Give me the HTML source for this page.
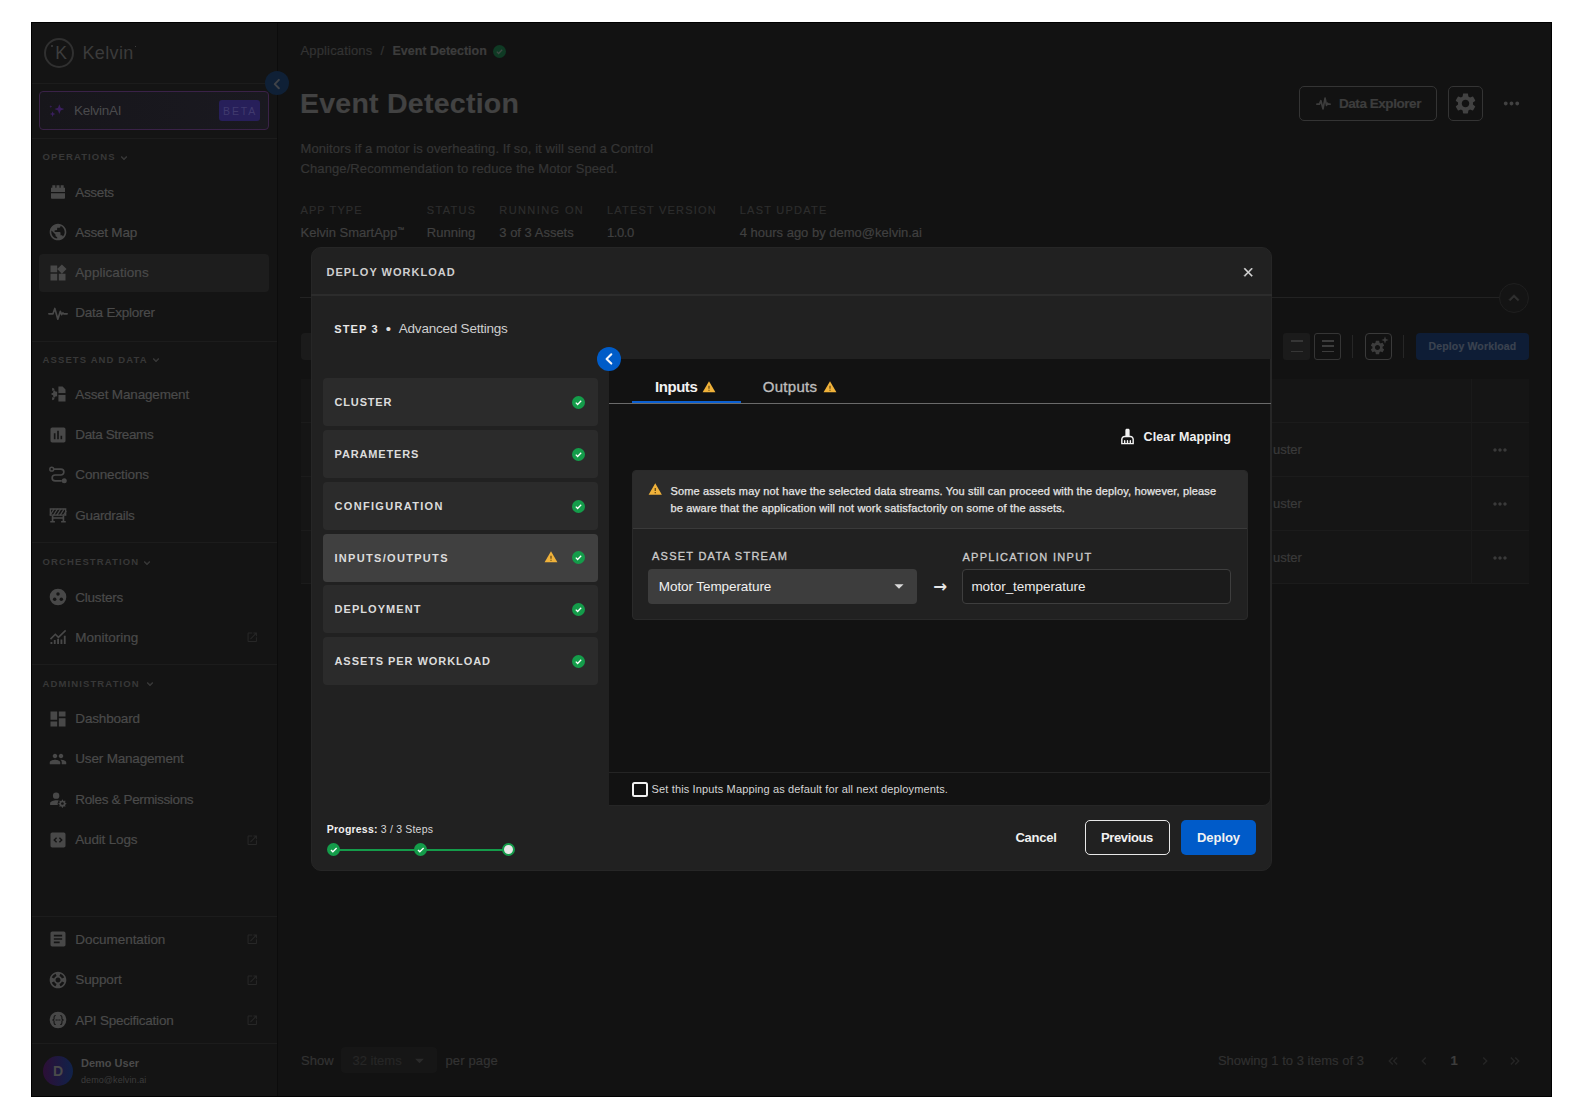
<!DOCTYPE html>
<html lang="en">
<head>
<meta charset="utf-8">
<title>Event Detection - Deploy Workload</title>
<style>
*{box-sizing:border-box;margin:0;padding:0}
html,body{width:1584px;height:1120px;background:#fff;overflow:hidden}
body{font-family:"Liberation Sans",sans-serif;position:relative;color:#444}
.abs,.t,.ic{position:absolute}
.t{white-space:nowrap;line-height:20px;height:20px}
.ic svg{display:block;width:100%;height:100%}
#app{position:absolute;left:31px;top:22px;width:1521px;height:1075px;background:#121212;border:1px solid #000;overflow:hidden}
/* everything inside #app is positioned in PAGE coordinates via this shifted layer */
#L{position:absolute;left:-32px;top:-23px;width:1584px;height:1120px}
#side{position:absolute;left:32px;top:23px;width:245px;height:1073px;background:#141414}
#sideb{position:absolute;left:277px;top:23px;width:1px;height:1073px;background:#0c0c0c}
.hr{position:absolute;left:32px;width:245px;height:1px;background:#1c1c1c}
.nav{font-size:13.5px;color:#4a4a4a;left:75.3px;-webkit-text-stroke:.2px #4a4a4a}
.sec{font-size:9.5px;font-weight:bold;letter-spacing:1.12px;color:#383838;left:42.5px}
.dim{color:#444}
.lab{font-size:11px;letter-spacing:1.3px;color:#2f2f2f}
.val{font-size:13.5px;color:#3e3e3e}
/* modal */
#modal{position:absolute;left:311px;top:247px;width:961px;height:624px;background:#212121;border-radius:10px;overflow:hidden;border:1px solid #262626}
#panel{position:absolute;left:609px;top:359px;width:662px;height:446.5px;background:#121212;border-bottom-right-radius:8px;border-right:1px solid #262626;border-bottom:1px solid #262626}
.item{position:absolute;left:323px;width:275px;height:48px;background:#2b2b2b;border-radius:4px}
.item.sel{background:#404040}
.itx{font-size:11.5px;font-weight:bold;letter-spacing:1.5px;color:#d9d9d9;left:334px}
</style>
</head>
<body>
<div id="app"><div id="L">

<!-- ============ SIDEBAR ============ -->
<div id="side"></div><div id="sideb"></div>
<div class="abs" style="left:44px;top:37.600px;width:30px;height:30px;border:2px solid #303030;border-radius:50%"></div>
<div class="t" style="left:55.200px;top:43px;font-size:17.5px;color:#3d3d3d;letter-spacing:0">K</div>
<div class="abs" style="left:51.400px;top:45.100px;width:2px;height:2px;border-radius:50%;background:#3d3d3d"></div>
<div class="t" style="left:82.500px;top:43px;font-size:18px;letter-spacing:.35px;color:#3b3b3b">Kelvin</div>
<div class="abs" style="left:134.5px;top:45.500px;width:1.5px;height:1.5px;background:#3d3d3d"></div>
<div class="hr" style="top:83px"></div>
<div class="hr" style="top:138px"></div>
<div class="hr" style="top:341px"></div>
<div class="hr" style="top:542px"></div>
<div class="hr" style="top:664px"></div>
<div class="hr" style="top:916px"></div>
<div class="hr" style="top:1043px"></div>
<div class="abs" style="left:39px;top:91px;width:230px;height:39px;border:1px solid #3a2248;border-radius:4px;background:linear-gradient(90deg,#17161b,#1a1920)"></div>
<div class="ic" style="left:48px;top:103px;width:17px;height:15px;color:#3a1f5e"><svg viewBox="0 0 24 20"><path d="M16 1l1.900 5.100L23 8l-5.100 1.900L16 15l-1.900-5.100L9 8l5.100-1.900zM6.500 11l1.100 2.900 2.900 1.100-2.900 1.100-1.100 2.900-1.100-2.900L2.500 15l2.900-1.100zM4 2.500l.6 1.400 1.400.6-1.400.6L4 6.500l-.6-1.400L2 4.500l1.400-.6z" fill="currentColor"/></svg></div>
<div class="t" style="left:74px;top:101px;font-size:13.5px;letter-spacing:-.3px;color:#4a4a4c">KelvinAI</div>
<div class="abs" style="left:219px;top:100px;width:41px;height:21px;border-radius:3px;background:#271f5a"></div>
<div class="t" style="left:223px;top:100.500px;font-size:10.5px;letter-spacing:1.9px;color:#403a6e">BETA</div>
<div class="abs" style="left:265px;top:71px;width:24px;height:24px;border-radius:50%;background:#0f2036;z-index:3"></div>
<div class="ic" style="left:268px;top:74.500px;width:18px;height:18px;color:#404348;z-index:4"><svg viewBox="0 0 24 24"><path d="M14.500 6.500L9 12.200l5.500 5.500" fill="none" stroke="currentColor" stroke-width="2.600" stroke-linecap="round" stroke-linejoin="round"/></svg></div>
<div class="t sec" style="top:147.2px">OPERATIONS</div>
<div class="ic" style="left:118.3px;top:151.5px;width:12px;height:12px;color:#3a3a3a"><svg viewBox="0 0 24 24"><g fill="currentColor" stroke="currentColor" stroke-width="1"><path d="M16.590 8.590L12 13.170 7.410 8.590 6 10l6 6 6-6z"/></g></svg></div>
<div class="t sec" style="top:349.5px">ASSETS AND DATA</div>
<div class="ic" style="left:150.0px;top:353.8px;width:12px;height:12px;color:#3a3a3a"><svg viewBox="0 0 24 24"><g fill="currentColor" stroke="currentColor" stroke-width="1"><path d="M16.590 8.590L12 13.170 7.410 8.590 6 10l6 6 6-6z"/></g></svg></div>
<div class="t sec" style="top:552.2px">ORCHESTRATION</div>
<div class="ic" style="left:141.4px;top:556.5px;width:12px;height:12px;color:#3a3a3a"><svg viewBox="0 0 24 24"><g fill="currentColor" stroke="currentColor" stroke-width="1"><path d="M16.590 8.590L12 13.170 7.410 8.590 6 10l6 6 6-6z"/></g></svg></div>
<div class="t sec" style="top:673.8px">ADMINISTRATION</div>
<div class="ic" style="left:144.3px;top:678.1px;width:12px;height:12px;color:#3a3a3a"><svg viewBox="0 0 24 24"><g fill="currentColor" stroke="currentColor" stroke-width="1"><path d="M16.590 8.590L12 13.170 7.410 8.590 6 10l6 6 6-6z"/></g></svg></div>
<div class="abs" style="left:39px;top:254px;width:230px;height:38px;border-radius:4px;background:#1d1d1d"></div>
<div class="ic" style="left:48px;top:182.0px;width:20px;height:20px;color:#484848"><svg viewBox="0 0 24 24"><g fill="currentColor"><path d="M3.600 6.800h1.600v-3h3.600v3h1.400v-3h3.600v3h1.400v-3h3.600v3h1.600v5.300H3.600zM3.600 13.600h16.800v5.600a1 1 0 0 1-1 1H4.600a1 1 0 0 1-1-1z"/></g></svg></div>
<div class="t nav" style="top:182.5px;letter-spacing:-0.35px">Assets</div>
<div class="ic" style="left:48px;top:222.0px;width:20px;height:20px;color:#484848"><svg viewBox="0 0 24 24"><g fill="currentColor"><path d="M12 2C6.48 2 2 6.48 2 12s4.48 10 10 10 10-4.48 10-10S17.52 2 12 2zm-1 17.93c-3.95-.49-7-3.85-7-7.93 0-.62.08-1.21.21-1.79L9 15v1c0 1.1.9 2 2 2v1.93zm6.9-2.54c-.26-.81-1-1.39-1.9-1.39h-1v-3c0-.55-.45-1-1-1H8v-2h2c.55 0 1-.45 1-1V7h2c1.1 0 2-.9 2-2v-.41c2.93 1.19 5 4.06 5 7.41 0 2.08-.8 3.97-2.1 5.39z"/></g></svg></div>
<div class="t nav" style="top:222.5px;letter-spacing:-0.24px">Asset Map</div>
<div class="ic" style="left:48px;top:262.5px;width:20px;height:20px;color:#484848"><svg viewBox="0 0 24 24"><g fill="currentColor"><path d="M13 13v8h8v-8h-8zM3 21h8v-8H3v8zM3 3v8h8V3H3zm13.66-1.31L11 7.34 16.66 13l5.66-5.66-5.66-5.65z"/></g></svg></div>
<div class="t nav" style="top:263.0px;letter-spacing:0.05px">Applications</div>
<div class="ic" style="left:48px;top:302.8px;width:20px;height:20px;color:#484848"><svg viewBox="0 0 24 24"><g fill="currentColor"><path d="M1 13h5l2.2-6.5 3.6 13 3-9.5 1.6 4 1.4-2.2 1 1.2h4.2" fill="none" stroke="currentColor" stroke-width="2" stroke-linejoin="round" stroke-linecap="round"/></g></svg></div>
<div class="t nav" style="top:303.3px;letter-spacing:-0.23px">Data Explorer</div>
<div class="ic" style="left:48px;top:384.0px;width:20px;height:20px;color:#484848"><svg viewBox="0 0 24 24"><g fill="currentColor"><path d="M12.5 3h5l3.5 3.5V11h-8.5zM12.5 13H21v8h-8.500zM9.500 9.5 11 8.600V15.400L9.500 14.500 8.300 16.200 6.200 15.400 6.200 13.500 4.200 13 4.200 11 6.200 10.500 6.200 8.600 8.300 7.800z"/><path d="M12.500 12h8.500" stroke="#141414" stroke-width="1.6"/><path d="M5 4.500l2.300 1 .6 2.200-2.900.500zM5 19.500l2.300-1 .6-2.200-2.900-.500z"/></g></svg></div>
<div class="t nav" style="top:384.5px;letter-spacing:-0.16px">Asset Management</div>
<div class="ic" style="left:48px;top:424.5px;width:20px;height:20px;color:#484848"><svg viewBox="0 0 24 24"><g fill="currentColor"><path d="M19 3H5c-1.1 0-2 .9-2 2v14c0 1.1.9 2 2 2h14c1.1 0 2-.9 2-2V5c0-1.100-.9-2-2-2zM9 17H7v-7h2v7zm4 0h-2V7h2v10zm4 0h-2v-4h2v4z"/></g></svg></div>
<div class="t nav" style="top:425.0px;letter-spacing:-0.38px">Data Streams</div>
<div class="ic" style="left:48px;top:464.9px;width:20px;height:20px;color:#484848"><svg viewBox="0 0 24 24"><g fill="currentColor"><circle cx="4.500" cy="5" r="2.300" fill="none" stroke="currentColor" stroke-width="1.800"/><circle cx="19.500" cy="19" r="3"/><path d="M7 5h8.500a3.500 3.500 0 0 1 0 7h-7a3.500 3.500 0 0 0 0 7h8" fill="none" stroke="currentColor" stroke-width="2"/></g></svg></div>
<div class="t nav" style="top:465.4px;letter-spacing:-0.13px">Connections</div>
<div class="ic" style="left:48px;top:505.0px;width:20px;height:20px;color:#484848"><svg viewBox="0 0 24 24"><g fill="currentColor"><path d="M2.800 4.800h18.400v7.400H2.800z" fill="none" stroke="currentColor" stroke-width="1.600"/><path d="M4.500 13h2v6.200h1.800v1.800H2.700v-1.800h1.800zM17.500 13h2v6.200h1.800v1.800h-5.600v-1.800h1.800zM6.500 14.800h11v1.700h-11z"/><path d="M2.500 12.500l5-8M6.500 12.500l5-8M10.500 12.500l5-8M14.500 12.500l5-8M18.500 12.500l3.500-5.500" fill="none" stroke="currentColor" stroke-width="1.500"/></g></svg></div>
<div class="t nav" style="top:505.5px;letter-spacing:-0.3px">Guardrails</div>
<div class="ic" style="left:48px;top:587.0px;width:20px;height:20px;color:#484848"><svg viewBox="0 0 24 24"><g fill="currentColor"><circle cx="12" cy="12" r="10"/><circle cx="12" cy="8.300" r="2.100" fill="#141414"/><circle cx="8" cy="14.800" r="2.100" fill="#141414"/><circle cx="16" cy="14.800" r="2.100" fill="#141414"/></g></svg></div>
<div class="t nav" style="top:587.5px;letter-spacing:-0.23px">Clusters</div>
<div class="ic" style="left:48px;top:627.2px;width:20px;height:20px;color:#484848"><svg viewBox="0 0 24 24"><g fill="currentColor"><path d="M3 20.500v-2.500h2.200v2.500zM7 20.500v-5h2.200v5zM11 20.500v-6.500h2.200v6.500zM15 20.500v-5.500h2.200v5.500zM19 20.500V10.500h2.200v10z"/><path d="M3 14.500l5.800-5.800 3.700 3.700L21.200 4" fill="none" stroke="currentColor" stroke-width="1.900"/></g></svg></div>
<div class="t nav" style="top:627.7px;letter-spacing:0px">Monitoring</div>
<div class="ic" style="left:245.800px;top:631.4px;width:12.5px;height:12.5px;color:#272727"><svg viewBox="0 0 24 24"><g fill="currentColor"><path d="M19 19H5V5h7V3H5c-1.110 0-2 .9-2 2v14c0 1.100.89 2 2 2h14c1.100 0 2-.9 2-2v-7h-2v7zM14 3v2h3.590l-9.830 9.830 1.410 1.410L19 6.410V10h2V3h-7z"/></g></svg></div>
<div class="ic" style="left:48px;top:708.5px;width:20px;height:20px;color:#484848"><svg viewBox="0 0 24 24"><g fill="currentColor"><path d="M3 13h8V3H3v10zm0 8h8v-6H3v6zm10 0h8V11h-8v10zm0-18v6h8V3h-8z"/></g></svg></div>
<div class="t nav" style="top:709.0px;letter-spacing:-0.16px">Dashboard</div>
<div class="ic" style="left:48px;top:748.8px;width:20px;height:20px;color:#484848"><svg viewBox="0 0 24 24"><g fill="currentColor"><path transform="translate(1.2 1.2) scale(.9)" d="M16 11c1.660 0 2.990-1.340 2.990-3S17.660 5 16 5c-1.660 0-3 1.340-3 3s1.340 3 3 3zm-8 0c1.660 0 2.990-1.340 2.990-3S9.660 5 8 5C6.340 5 5 6.340 5 8s1.340 3 3 3zm0 2c-2.330 0-7 1.170-7 3.500V19h14v-2.500c0-2.330-4.670-3.500-7-3.500zm8 0c-.29 0-.62.020-.97.050 1.160.840 1.970 1.970 1.970 3.450V19h6v-2.500c0-2.330-4.670-3.500-7-3.500z"/></g></svg></div>
<div class="t nav" style="top:749.3px;letter-spacing:-0.18px">User Management</div>
<div class="ic" style="left:48px;top:789.1px;width:20px;height:20px;color:#484848"><svg viewBox="0 0 24 24"><g fill="currentColor"><g transform="translate(1.200 1.200) scale(.9)"><circle cx="9.500" cy="7.500" r="4.300"/><path d="M9.500 13.500c1.200 0 2.500.2 3.600.5-1 1.100-1.600 2.500-1.600 4 0 .7.100 1.400.400 2H1.500v-2.500c0-2.700 5.300-4 8-4z"/><path d="M17.500 12.800l1 .1.400 1.300 1.200.5 1.200-.7.800.8-.7 1.200.5 1.200 1.300.4v1.200l-1.300.4-.5 1.200.7 1.200-.8.800-1.200-.7-1.200.5-.4 1.300h-1.200l-.4-1.300-1.200-.5-1.200.7-.8-.8.700-1.200-.5-1.200-1.300-.4v-1.200l1.300-.4.500-1.200-.700-1.200.8-.8 1.200.7 1.200-.5zM17.900 16.200a1.800 1.800 0 1 0 .001 0z" fill-rule="evenodd"/></g></g></svg></div>
<div class="t nav" style="top:789.6px;letter-spacing:-0.35px">Roles &amp; Permissions</div>
<div class="ic" style="left:48px;top:829.5px;width:20px;height:20px;color:#484848"><svg viewBox="0 0 24 24"><g fill="currentColor"><path d="M5 3h14c1.100 0 2 .9 2 2v14c0 1.100-.9 2-2 2H5c-1.100 0-2-.9-2-2V5c0-1.100.9-2 2-2zm4.700 5.600L6.300 12l3.400 3.400 1.200-1.200L8.700 12l2.200-2.200zm4.600 0l-1.200 1.200 2.200 2.200-2.200 2.200 1.200 1.200 3.400-3.400z" fill-rule="evenodd"/></g></svg></div>
<div class="t nav" style="top:830.0px;letter-spacing:-0.18px">Audit Logs</div>
<div class="ic" style="left:245.800px;top:833.7px;width:12.5px;height:12.5px;color:#272727"><svg viewBox="0 0 24 24"><g fill="currentColor"><path d="M19 19H5V5h7V3H5c-1.110 0-2 .9-2 2v14c0 1.100.89 2 2 2h14c1.100 0 2-.9 2-2v-7h-2v7zM14 3v2h3.590l-9.830 9.830 1.410 1.410L19 6.410V10h2V3h-7z"/></g></svg></div>
<div class="ic" style="left:48px;top:929.1px;width:20px;height:20px;color:#484848"><svg viewBox="0 0 24 24"><g fill="currentColor"><path d="M19 3H5c-1.100 0-2 .9-2 2v14c0 1.100.9 2 2 2h14c1.100 0 2-.9 2-2V5c0-1.100-.9-2-2-2zm-5 14H7v-2h7v2zm3-4H7v-2h10v2zm0-4H7V7h10v2z"/></g></svg></div>
<div class="t nav" style="top:929.6px;letter-spacing:-0.06px">Documentation</div>
<div class="ic" style="left:245.800px;top:933.3px;width:12.5px;height:12.5px;color:#272727"><svg viewBox="0 0 24 24"><g fill="currentColor"><path d="M19 19H5V5h7V3H5c-1.110 0-2 .9-2 2v14c0 1.100.89 2 2 2h14c1.100 0 2-.9 2-2v-7h-2v7zM14 3v2h3.590l-9.830 9.830 1.410 1.410L19 6.410V10h2V3h-7z"/></g></svg></div>
<div class="ic" style="left:48px;top:969.5px;width:20px;height:20px;color:#484848"><svg viewBox="0 0 24 24"><g fill="currentColor"><path d="M12 2C6.480 2 2 6.480 2 12s4.480 10 10 10 10-4.480 10-10S17.520 2 12 2zm7.460 7.120l-2.780 1.150c-.51-1.360-1.580-2.440-2.950-2.940l1.150-2.780c2.100.8 3.770 2.470 4.580 4.570zM12 15c-1.660 0-3-1.340-3-3s1.340-3 3-3 3 1.340 3 3-1.340 3-3 3zM9.130 4.540l1.170 2.780c-1.380.5-2.470 1.590-2.980 2.970L4.540 9.130c.81-2.110 2.480-3.780 4.590-4.590zM4.540 14.870l2.780-1.150c.51 1.380 1.590 2.460 2.970 2.960l-1.170 2.780c-2.100-.81-3.770-2.480-4.580-4.590zm10.340 4.590l-1.150-2.780c1.370-.51 2.450-1.590 2.950-2.970l2.780 1.170c-.81 2.100-2.480 3.770-4.580 4.580z"/></g></svg></div>
<div class="t nav" style="top:970.0px;letter-spacing:-0.13px">Support</div>
<div class="ic" style="left:245.800px;top:973.7px;width:12.5px;height:12.5px;color:#272727"><svg viewBox="0 0 24 24"><g fill="currentColor"><path d="M19 19H5V5h7V3H5c-1.110 0-2 .9-2 2v14c0 1.100.89 2 2 2h14c1.100 0 2-.9 2-2v-7h-2v7zM14 3v2h3.590l-9.830 9.830 1.410 1.410L19 6.410V10h2V3h-7z"/></g></svg></div>
<div class="ic" style="left:48px;top:1010.0px;width:20px;height:20px;color:#484848"><svg viewBox="0 0 24 24"><g fill="currentColor"><circle cx="12" cy="12" r="10"/><path d="M9.300 6.500c-1.600 0-2 .8-2 2v1.700c0 .9-.5 1.400-1.300 1.500v.6c.8.100 1.300.6 1.300 1.500v1.700c0 1.200.4 2 2 2M14.700 6.500c1.600 0 2 .8 2 2v1.700c0 .9.500 1.400 1.300 1.500v.6c-.8.100-1.300.6-1.300 1.500v1.700c0 1.200-.4 2-2 2" fill="none" stroke="#141414" stroke-width="1.300"/><circle cx="9.800" cy="12" r=".8" fill="#141414"/><circle cx="12" cy="12" r=".8" fill="#141414"/><circle cx="14.200" cy="12" r=".8" fill="#141414"/></g></svg></div>
<div class="t nav" style="top:1010.5px;letter-spacing:-0.23px">API Specification</div>
<div class="ic" style="left:245.800px;top:1014.2px;width:12.5px;height:12.5px;color:#272727"><svg viewBox="0 0 24 24"><g fill="currentColor"><path d="M19 19H5V5h7V3H5c-1.110 0-2 .9-2 2v14c0 1.100.89 2 2 2h14c1.100 0 2-.9 2-2v-7h-2v7zM14 3v2h3.590l-9.830 9.830 1.410 1.410L19 6.410V10h2V3h-7z"/></g></svg></div>
<div class="abs" style="left:43px;top:1056px;width:30px;height:30px;border-radius:50%;background:linear-gradient(90deg,#2c0f36,#10224a)"></div>
<div class="t" style="left:43px;width:30px;text-align:center;top:1061px;font-size:14px;font-weight:bold;color:#4a4a4a">D</div>
<div class="t" style="left:81px;top:1052.500px;font-size:11px;font-weight:bold;color:#4a4a4a">Demo User</div>
<div class="t" style="left:81px;top:1069.500px;font-size:9px;letter-spacing:.09px;color:#3c3c3c">demo@kelvin.ai</div>


<!-- ============ MAIN (dimmed) ============ -->
<div class="t" style="left:300.5px;top:41.2px;font-size:13px;color:#333;-webkit-text-stroke:.2px #333;letter-spacing:0.15px;">Applications</div>
<div class="t" style="left:380.5px;top:41.2px;font-size:13px;color:#333;-webkit-text-stroke:.2px #333;">/</div>
<div class="t" style="left:392.4px;top:41.4px;font-size:12.5px;color:#3c3c3c;-webkit-text-stroke:.2px #3c3c3c;font-weight:bold;">Event Detection</div>
<div class="abs" style="left:493px;top:45.200px;width:13px;height:13px;border-radius:50%;background:#0f3a24"></div>
<div class="ic" style="left:493px;top:45.200px;width:13px;height:13px"><svg viewBox="0 0 24 24"><path d="M7 12.300l3.300 3.300 6.700-6.900" fill="none" stroke="#3f4a44" stroke-width="2.400"/></svg></div>
<div class="t" style="left:300px;top:92.7px;font-size:28.5px;color:#424242;-webkit-text-stroke:.2px #424242;font-weight:bold;letter-spacing:0.25px;line-height:40px;height:40px;margin-top:-10px;">Event Detection</div>
<div class="t" style="left:300.5px;top:138.8px;font-size:13px;color:#353535;-webkit-text-stroke:.2px #353535;letter-spacing:0.08px;">Monitors if a motor is overheating. If so, it will send a Control</div>
<div class="t" style="left:300.5px;top:158.8px;font-size:13px;color:#353535;-webkit-text-stroke:.2px #353535;letter-spacing:0.1px;">Change/Recommendation to reduce the Motor Speed.</div>
<div class="t" style="left:300.5px;top:200.0px;font-size:11px;color:#2d2d2d;-webkit-text-stroke:.2px #2d2d2d;letter-spacing:1.1px;">APP TYPE</div>
<div class="t" style="left:300.5px;top:223.0px;font-size:13px;color:#404040;-webkit-text-stroke:.2px #404040;">Kelvin SmartApp<span style="font-size:7px;position:relative;top:-5px;line-height:0">™</span></div>
<div class="t" style="left:426.8px;top:200.0px;font-size:11px;color:#2d2d2d;-webkit-text-stroke:.2px #2d2d2d;letter-spacing:1.3px;">STATUS</div>
<div class="t" style="left:426.8px;top:223.0px;font-size:13px;color:#404040;-webkit-text-stroke:.2px #404040;">Running</div>
<div class="t" style="left:499.3px;top:200.0px;font-size:11px;color:#2d2d2d;-webkit-text-stroke:.2px #2d2d2d;letter-spacing:1.4px;">RUNNING ON</div>
<div class="t" style="left:499.3px;top:223.0px;font-size:13px;color:#404040;-webkit-text-stroke:.2px #404040;">3 of 3 Assets</div>
<div class="t" style="left:607px;top:200.0px;font-size:11px;color:#2d2d2d;-webkit-text-stroke:.2px #2d2d2d;letter-spacing:1.2px;">LATEST VERSION</div>
<div class="t" style="left:607px;top:223.0px;font-size:13px;color:#404040;-webkit-text-stroke:.2px #404040;letter-spacing:-0.4px;">1.0.0</div>
<div class="t" style="left:739.7px;top:200.0px;font-size:11px;color:#2d2d2d;-webkit-text-stroke:.2px #2d2d2d;letter-spacing:1.25px;">LAST UPDATE</div>
<div class="t" style="left:739.7px;top:223.0px;font-size:13px;color:#404040;-webkit-text-stroke:.2px #404040;">4 hours ago by demo@kelvin.ai</div>
<div class="abs" style="left:1299px;top:86px;width:138px;height:35px;border:1.5px solid #343434;border-radius:5px"></div>
<div class="ic" style="left:1316px;top:96px;width:15px;height:15px;color:#3d3d3d;"><svg viewBox="0 0 24 24"><g fill="currentColor"><path d="M1.500 13h4l2.300-5.500 3.400 13 3.300-17 2.300 11.500 1.700-3.500 1.200 1.500h2.800" fill="none" stroke="currentColor" stroke-width="2.700" stroke-linejoin="round" stroke-linecap="round"/></g></svg></div>
<div class="t" style="left:1339px;top:94.0px;font-size:13.5px;color:#3d3d3d;-webkit-text-stroke:.2px #3d3d3d;font-weight:bold;letter-spacing:-0.45px;">Data Explorer</div>
<div class="abs" style="left:1448px;top:86px;width:35px;height:35px;border:1.5px solid #343434;border-radius:5px"></div>
<div class="ic" style="left:1453px;top:91px;width:25px;height:25px;color:#424242;"><svg viewBox="0 0 24 24"><g fill="currentColor"><path d="M19.140 12.940c.04-.3.06-.61.06-.94 0-.32-.02-.64-.07-.94l2.030-1.580c.18-.14.23-.41.12-.61l-1.920-3.320c-.12-.22-.37-.29-.59-.22l-2.390.96c-.5-.38-1.030-.7-1.620-.94l-.36-2.540c-.04-.24-.24-.41-.48-.41h-3.840c-.24 0-.43.17-.47.41l-.36 2.540c-.59.24-1.130.57-1.620.94l-2.390-.96c-.22-.08-.47 0-.59.22L2.740 8.870c-.12.21-.08.47.12.61l2.030 1.580c-.05.3-.09.63-.09.94s.02.64.07.94l-2.030 1.580c-.18.14-.23.41-.12.61l1.920 3.320c.12.22.37.29.59.22l2.390-.96c.5.38 1.030.7 1.620.94l.36 2.540c.05.24.24.41.48.41h3.840c.24 0 .44-.17.47-.41l.36-2.540c.59-.24 1.130-.56 1.620-.94l2.390.96c.22.08.47 0 .59-.22l1.920-3.320c.12-.22.07-.47-.12-.61l-2.010-1.580zM12 15.600c-1.980 0-3.600-1.620-3.600-3.600s1.620-3.600 3.600-3.600 3.600 1.620 3.600 3.600-1.620 3.600-3.600 3.600z"/></g></svg></div>
<div class="ic" style="left:1500px;top:92px;width:23px;height:23px;color:#424242;"><svg viewBox="0 0 24 24"><g fill="currentColor"><path d="M6 10c-1.100 0-2 .9-2 2s.9 2 2 2 2-.9 2-2-.9-2-2-2zm12 0c-1.100 0-2 .9-2 2s.9 2 2 2 2-.9 2-2-.9-2-2-2zm-6 0c-1.100 0-2 .9-2 2s.9 2 2 2 2-.9 2-2-.9-2-2-2z"/></g></svg></div>
<div class="abs" style="left:300px;top:297px;width:1199px;height:1px;background:#222"></div>
<div class="abs" style="left:1499px;top:283px;width:30px;height:30px;border-radius:50%;border:1px solid #1f1f1f;background:#141414"></div>
<div class="ic" style="left:1504px;top:288px;width:20px;height:20px;color:#303030;"><svg viewBox="0 0 24 24"><g fill="currentColor"><path d="M12 8l-6 6 1.410 1.410L12 10.830l4.590 4.580L18 14z" stroke="#303030" stroke-width=".8"/></g></svg></div>
<div class="abs" style="left:301px;top:333px;width:300px;height:27px;border-radius:4px;background:#1b1b1b"></div>
<div class="abs" style="left:1283px;top:333px;width:27px;height:27px;border-radius:3px;background:#1b1b1b"></div>
<div class="abs" style="left:1290.500px;top:340.300px;width:12px;height:1.8px;background:#363636"></div><div class="abs" style="left:1290.500px;top:350.500px;width:12px;height:1.8px;background:#363636"></div>
<div class="abs" style="left:1314px;top:333px;width:27px;height:27px;border-radius:3px;border:1px solid #353535"></div>
<div class="abs" style="left:1321.500px;top:340.3px;width:12px;height:1.8px;background:#3c3c3c"></div>
<div class="abs" style="left:1321.500px;top:345.4px;width:12px;height:1.8px;background:#3c3c3c"></div>
<div class="abs" style="left:1321.500px;top:350.5px;width:12px;height:1.8px;background:#3c3c3c"></div>
<div class="abs" style="left:1352px;top:335px;width:1px;height:23px;background:#262626"></div>
<div class="abs" style="left:1365px;top:333px;width:27px;height:27px;border-radius:4px;border:1px solid #3a3a3a"></div>
<div class="ic" style="left:1369px;top:338.5px;width:17px;height:17px;color:#3c3c3c;"><svg viewBox="0 0 24 24"><g fill="currentColor"><path d="M19.140 12.940c.04-.3.06-.61.06-.94 0-.32-.02-.64-.07-.94l2.030-1.580c.18-.14.23-.41.12-.61l-1.920-3.320c-.12-.22-.37-.29-.59-.22l-2.390.96c-.5-.38-1.030-.7-1.620-.94l-.36-2.540c-.04-.24-.24-.41-.48-.41h-3.840c-.24 0-.43.17-.47.41l-.36 2.540c-.59.24-1.130.57-1.620.94l-2.390-.96c-.22-.08-.47 0-.59.22L2.740 8.870c-.12.21-.08.47.12.61l2.030 1.580c-.05.3-.09.63-.09.94s.02.64.07.94l-2.030 1.580c-.18.14-.23.41-.12.61l1.920 3.320c.12.22.37.29.59.22l2.390-.96c.5.38 1.030.7 1.620.94l.36 2.540c.05.24.24.41.48.41h3.840c.24 0 .44-.17.47-.41l.36-2.540c.59-.24 1.130-.56 1.620-.94l2.390.96c.22.08.47 0 .59-.22l1.920-3.320c.12-.22.07-.47-.12-.61l-2.010-1.580zM12 15.600c-1.980 0-3.600-1.620-3.600-3.600s1.620-3.600 3.600-3.600 3.600 1.620 3.600 3.600-1.620 3.600-3.600 3.600z"/></g></svg></div>
<div class="ic" style="left:1381px;top:336px;width:8px;height:8px;color:#3c3c3c;"><svg viewBox="0 0 24 24"><g fill="currentColor"><path d="M12 1l2.800 8.200L23 12l-8.200 2.800L12 23l-2.800-8.200L1 12l8.200-2.800z"/></g></svg></div>
<div class="abs" style="left:1403px;top:335px;width:1px;height:23px;background:#262626"></div>
<div class="abs" style="left:1416px;top:333px;width:113px;height:27px;border-radius:4px;background:#0e1d36"></div>
<div class="t" style="left:1428.5px;top:336.3px;font-size:10.5px;color:#3b4350;-webkit-text-stroke:.2px #3b4350;font-weight:bold;letter-spacing:0.15px;">Deploy Workload</div>
<div class="abs" style="left:301px;top:379px;width:1228px;height:205px;background:#151515"></div>
<div class="abs" style="left:301px;top:422px;width:1228px;height:1px;background:#1b1b1b"></div>
<div class="abs" style="left:301px;top:476px;width:1228px;height:1px;background:#1b1b1b"></div>
<div class="abs" style="left:301px;top:530px;width:1228px;height:1px;background:#1b1b1b"></div>
<div class="abs" style="left:301px;top:583px;width:1228px;height:1px;background:#1b1b1b"></div>
<div class="abs" style="left:1471px;top:379px;width:1px;height:205px;background:#1a1a1a"></div>
<div class="t" style="left:1273px;top:440.0px;font-size:13px;color:#3a3a3a;-webkit-text-stroke:.2px #3a3a3a;">uster</div>
<div class="ic" style="left:1490px;top:440px;width:20px;height:20px;color:#3a3a3a;"><svg viewBox="0 0 24 24"><g fill="currentColor"><path d="M6 10c-1.100 0-2 .9-2 2s.9 2 2 2 2-.9 2-2-.9-2-2-2zm12 0c-1.100 0-2 .9-2 2s.9 2 2 2 2-.9 2-2-.9-2-2-2zm-6 0c-1.100 0-2 .9-2 2s.9 2 2 2 2-.9 2-2-.9-2-2-2z"/></g></svg></div>
<div class="t" style="left:1273px;top:494.0px;font-size:13px;color:#3a3a3a;-webkit-text-stroke:.2px #3a3a3a;">uster</div>
<div class="ic" style="left:1490px;top:494px;width:20px;height:20px;color:#3a3a3a;"><svg viewBox="0 0 24 24"><g fill="currentColor"><path d="M6 10c-1.100 0-2 .9-2 2s.9 2 2 2 2-.9 2-2-.9-2-2-2zm12 0c-1.100 0-2 .9-2 2s.9 2 2 2 2-.9 2-2-.9-2-2-2zm-6 0c-1.100 0-2 .9-2 2s.9 2 2 2 2-.9 2-2-.9-2-2-2z"/></g></svg></div>
<div class="t" style="left:1273px;top:547.9px;font-size:13px;color:#3a3a3a;-webkit-text-stroke:.2px #3a3a3a;">uster</div>
<div class="ic" style="left:1490px;top:547.9px;width:20px;height:20px;color:#3a3a3a;"><svg viewBox="0 0 24 24"><g fill="currentColor"><path d="M6 10c-1.100 0-2 .9-2 2s.9 2 2 2 2-.9 2-2-.9-2-2-2zm12 0c-1.100 0-2 .9-2 2s.9 2 2 2 2-.9 2-2-.9-2-2-2zm-6 0c-1.100 0-2 .9-2 2s.9 2 2 2 2-.9 2-2-.9-2-2-2z"/></g></svg></div>
<div class="t" style="left:301px;top:1050.8px;font-size:13px;color:#333;-webkit-text-stroke:.2px #333;">Show</div>
<div class="abs" style="left:341px;top:1047px;width:96px;height:26px;border-radius:4px;background:#161616"></div>
<div class="t" style="left:352.5px;top:1050.8px;font-size:13px;color:#262626;-webkit-text-stroke:.2px #262626;">32 items</div>
<div class="ic" style="left:408.5px;top:1050.3px;width:21px;height:21px;color:#2a2a2a;"><svg viewBox="0 0 24 24"><g fill="currentColor"><path d="M7 10l5 5 5-5z"/></g></svg></div>
<div class="t" style="left:445.4px;top:1050.8px;font-size:13px;color:#333;-webkit-text-stroke:.2px #333;letter-spacing:0.15px;">per page</div>
<div class="t" style="left:1217.9px;top:1050.8px;font-size:13px;color:#303030;-webkit-text-stroke:.2px #303030;">Showing 1 to 3 items of 3</div>
<div class="ic" style="left:1385px;top:1052.8px;width:16px;height:16px;color:#262626;"><svg viewBox="0 0 24 24"><g fill="currentColor"><path d="M17.590 18L19 16.590 14.420 12 19 7.410 17.590 6l-6 6zM11 18l1.410-1.410L7.830 12l4.580-4.590L11 6l-6 6z"/></g></svg></div>
<div class="ic" style="left:1415.5px;top:1052.8px;width:16px;height:16px;color:#262626;"><svg viewBox="0 0 24 24"><g fill="currentColor"><path d="M15.410 7.410L14 6l-6 6 6 6 1.410-1.410L10.830 12z"/></g></svg></div>
<div class="t" style="left:1450.5px;top:1050.8px;font-size:13px;color:#3d3d3d;-webkit-text-stroke:.2px #3d3d3d;font-weight:bold;">1</div>
<div class="ic" style="left:1476.5px;top:1052.8px;width:16px;height:16px;color:#262626;transform:scaleX(-1);"><svg viewBox="0 0 24 24"><g fill="currentColor"><path d="M15.410 7.410L14 6l-6 6 6 6 1.410-1.410L10.830 12z"/></g></svg></div>
<div class="ic" style="left:1507px;top:1052.8px;width:16px;height:16px;color:#262626;transform:scaleX(-1);"><svg viewBox="0 0 24 24"><g fill="currentColor"><path d="M17.590 18L19 16.590 14.420 12 19 7.410 17.590 6l-6 6zM11 18l1.410-1.410L7.830 12l4.580-4.590L11 6l-6 6z"/></g></svg></div>


<!-- ============ MODAL ============ -->
<div id="modal"></div>
<div id="panel"></div>
<div class="t" style="left:326.5px;top:261.6px;font-size:11px;color:#cfcfcf;font-weight:bold;letter-spacing:1.0px;">DEPLOY WORKLOAD</div>
<div class="ic" style="left:1241.2px;top:265px;width:14.5px;height:14.5px;color:#dcdcdc;"><svg viewBox="0 0 24 24"><g fill="currentColor"><path d="M19 6.410L17.590 5 12 10.590 6.410 5 5 6.410 10.590 12 5 17.590 6.410 19 12 13.410 17.590 19 19 17.590 13.410 12z" stroke="#dcdcdc" stroke-width=".8"/></g></svg></div>
<div class="abs" style="left:311px;top:294px;width:961px;height:1.5px;background:#2c2c2c"></div>
<div class="t" style="left:334.3px;top:319.0px;font-size:11px;color:#e8e8e8;font-weight:bold;letter-spacing:1.1px;">STEP 3</div>
<div class="t" style="left:385.8px;top:318.8px;font-size:15px;color:#e0e0e0;">•</div>
<div class="t" style="left:398.8px;top:318.6px;font-size:13.5px;color:#cfcfcf;letter-spacing:-0.22px;">Advanced Settings</div>
<div class="item" style="top:378px"></div>
<div class="t" style="left:334.5px;top:392.2px;font-size:11px;color:#dcdcdc;font-weight:bold;letter-spacing:0.84px;">CLUSTER</div>
<div class="abs" style="left:571.5px;top:395.5px;width:13.0px;height:13.0px;border-radius:50%;background:#149c4a"></div>
<div class="ic" style="left:571.5px;top:395.5px;width:13.0px;height:13.0px"><svg viewBox="0 0 24 24"><path d="M7 12.300l3.300 3.300 6.700-6.900" fill="none" stroke="#fff" stroke-width="2.400"/></svg></div>
<div class="item" style="top:430px"></div>
<div class="t" style="left:334.5px;top:444.2px;font-size:11px;color:#dcdcdc;font-weight:bold;letter-spacing:0.86px;">PARAMETERS</div>
<div class="abs" style="left:571.5px;top:447.5px;width:13.0px;height:13.0px;border-radius:50%;background:#149c4a"></div>
<div class="ic" style="left:571.5px;top:447.5px;width:13.0px;height:13.0px"><svg viewBox="0 0 24 24"><path d="M7 12.300l3.300 3.300 6.700-6.900" fill="none" stroke="#fff" stroke-width="2.400"/></svg></div>
<div class="item" style="top:482px"></div>
<div class="t" style="left:334.5px;top:496.2px;font-size:11px;color:#dcdcdc;font-weight:bold;letter-spacing:1.32px;">CONFIGURATION</div>
<div class="abs" style="left:571.5px;top:499.5px;width:13.0px;height:13.0px;border-radius:50%;background:#149c4a"></div>
<div class="ic" style="left:571.5px;top:499.5px;width:13.0px;height:13.0px"><svg viewBox="0 0 24 24"><path d="M7 12.300l3.300 3.300 6.700-6.900" fill="none" stroke="#fff" stroke-width="2.400"/></svg></div>
<div class="item sel" style="top:533.5px"></div>
<div class="t" style="left:334.5px;top:547.7px;font-size:11px;color:#dcdcdc;font-weight:bold;letter-spacing:1.31px;">INPUTS/OUTPUTS</div>
<div class="abs" style="left:571.5px;top:551.0px;width:13.0px;height:13.0px;border-radius:50%;background:#149c4a"></div>
<div class="ic" style="left:571.5px;top:551.0px;width:13.0px;height:13.0px"><svg viewBox="0 0 24 24"><path d="M7 12.300l3.300 3.300 6.700-6.900" fill="none" stroke="#fff" stroke-width="2.400"/></svg></div>
<div class="item" style="top:585px"></div>
<div class="t" style="left:334.5px;top:599.2px;font-size:11px;color:#dcdcdc;font-weight:bold;letter-spacing:1.06px;">DEPLOYMENT</div>
<div class="abs" style="left:571.5px;top:602.5px;width:13.0px;height:13.0px;border-radius:50%;background:#149c4a"></div>
<div class="ic" style="left:571.5px;top:602.5px;width:13.0px;height:13.0px"><svg viewBox="0 0 24 24"><path d="M7 12.300l3.300 3.300 6.700-6.900" fill="none" stroke="#fff" stroke-width="2.400"/></svg></div>
<div class="item" style="top:637px"></div>
<div class="t" style="left:334.5px;top:651.2px;font-size:11px;color:#dcdcdc;font-weight:bold;letter-spacing:0.93px;">ASSETS PER WORKLOAD</div>
<div class="abs" style="left:571.5px;top:654.5px;width:13.0px;height:13.0px;border-radius:50%;background:#149c4a"></div>
<div class="ic" style="left:571.5px;top:654.5px;width:13.0px;height:13.0px"><svg viewBox="0 0 24 24"><path d="M7 12.300l3.300 3.300 6.700-6.900" fill="none" stroke="#fff" stroke-width="2.400"/></svg></div>
<div class="ic" style="left:544.3px;top:550.3px;width:14px;height:14px"><svg viewBox="0 0 24 24"><path d="M1 21h22L12 2z" fill="#f0b23a"/><path d="M11 10h2v5h-2zM11 16.500h2v2h-2z" fill="#5a4010"/></svg></div>
<div class="abs" style="left:597px;top:347px;width:24px;height:24px;border-radius:50%;background:#005cc8"></div>
<div class="ic" style="left:597px;top:347px;width:24px;height:24px"><svg viewBox="0 0 24 24"><path d="M14.300 7.300L9.600 11.900l4.700 4.700" fill="none" stroke="#f4f6fb" stroke-width="2.100" stroke-linecap="round" stroke-linejoin="round"/></svg></div>
<div class="t" style="left:655px;top:376.9px;font-size:15px;color:#f2f2f2;font-weight:bold;letter-spacing:-0.45px;">Inputs</div>
<div class="ic" style="left:701.8px;top:379.5px;width:14px;height:14px"><svg viewBox="0 0 24 24"><path d="M1 21h22L12 2z" fill="#f0b23a"/><path d="M11 10h2v5h-2zM11 16.500h2v2h-2z" fill="#5a4010"/></svg></div>
<div class="t" style="left:762.7px;top:376.9px;font-size:15px;color:#bdbdbd;letter-spacing:0.3px;-webkit-text-stroke:.35px #bdbdbd;">Outputs</div>
<div class="ic" style="left:822.8px;top:379.5px;width:14px;height:14px"><svg viewBox="0 0 24 24"><path d="M1 21h22L12 2z" fill="#f0b23a"/><path d="M11 10h2v5h-2zM11 16.500h2v2h-2z" fill="#5a4010"/></svg></div>
<div class="abs" style="left:609px;top:403px;width:662px;height:1px;background:#6a6a6a"></div>
<div class="abs" style="left:632px;top:401px;width:109px;height:2px;background:#0b60d2"></div>
<div class="ic" style="left:1119px;top:428.4px;width:17px;height:17px;color:#f2f2f2;"><svg viewBox="0 0 24 24"><g fill="currentColor"><path d="M16 11h-1V3c0-1.100-.9-2-2-2h-2c-1.100 0-2 .9-2 2v8H8c-2.760 0-5 2.240-5 5v7h18v-7c0-2.760-2.240-5-5-5zm3 10h-2v-3c0-.55-.45-1-1-1s-1 .45-1 1v3h-2v-3c0-.55-.45-1-1-1s-1 .45-1 1v3H9v-3c0-.55-.45-1-1-1s-1 .45-1 1v3H5v-5c0-1.650 1.350-3 3-3h8c1.650 0 3 1.350 3 3v5z"/></g></svg></div>
<div class="t" style="left:1143.6px;top:427.0px;font-size:12.5px;color:#f0f0f0;font-weight:bold;letter-spacing:0.1px;">Clear Mapping</div>
<div class="abs" style="left:632px;top:470px;width:616px;height:150px;border-radius:4px;background:#212121;border:1px solid #2a2a2a;overflow:hidden"><div style="height:58px;background:#2b2b2b;border-bottom:1px solid #3a3a3a"></div></div>
<div class="ic" style="left:647.65px;top:481.55px;width:14.5px;height:14.5px"><svg viewBox="0 0 24 24"><path d="M1 21h22L12 2z" fill="#f0b23a"/><path d="M11 10h2v5h-2zM11 16.500h2v2h-2z" fill="#5a4010"/></svg></div>
<div class="t" style="left:670.4px;top:480.6px;font-size:11px;color:#e6e6e6;letter-spacing:0.15px;-webkit-text-stroke:.25px #e6e6e6;">Some assets may not have the selected data streams. You still can proceed with the deploy, however, please</div>
<div class="t" style="left:670.4px;top:498.0px;font-size:11px;color:#e6e6e6;letter-spacing:0.17px;-webkit-text-stroke:.25px #e6e6e6;">be aware that the application will not work satisfactorily on some of the assets.</div>
<div class="t" style="left:652px;top:546.0px;font-size:11px;color:#cdcdcd;letter-spacing:1.25px;-webkit-text-stroke:.3px #cdcdcd;">ASSET DATA STREAM</div>
<div class="t" style="left:962.4px;top:547.0px;font-size:11px;color:#cdcdcd;letter-spacing:1.3px;-webkit-text-stroke:.3px #cdcdcd;">APPLICATION INPUT</div>
<div class="abs" style="left:648px;top:569px;width:269px;height:35px;border-radius:4px;background:#3d3d3d"></div>
<div class="t" style="left:658.8px;top:576.7px;font-size:13.5px;color:#f0f0f0;letter-spacing:-0.08px;">Motor Temperature</div>
<div class="ic" style="left:887.8px;top:575.4px;width:22px;height:22px;color:#dadada;"><svg viewBox="0 0 24 24"><g fill="currentColor"><path d="M7 10l5 5 5-5z"/></g></svg></div>
<div class="t" style="left:933.2px;top:577.0px;font-size:16.5px;color:#e6e6e6;font-weight:bold;font-family:'DejaVu Sans',sans-serif;">→</div>
<div class="abs" style="left:962px;top:569px;width:269px;height:35px;border-radius:4px;background:#1b1b1b;border:1px solid #3e3e3e"></div>
<div class="t" style="left:971.4px;top:576.7px;font-size:13.5px;color:#ededed;letter-spacing:-0.05px;">motor_temperature</div>
<div class="abs" style="left:609px;top:771.500px;width:662px;height:1px;background:#242424"></div>
<div class="abs" style="left:632px;top:781.500px;width:15.5px;height:15.5px;border:2px solid #f2f2f2;border-radius:2.5px"></div>
<div class="t" style="left:651.6px;top:778.8px;font-size:11px;color:#d5d5d5;letter-spacing:0.14px;">Set this Inputs Mapping as default for all next deployments.</div>
<div class="t" style="left:326.8px;top:819.3px;font-size:10.5px;color:#d8d8d8;letter-spacing:0.2px;"><b style="color:#f0f0f0">Progress:</b> 3 / 3 Steps</div>
<div class="abs" style="left:333px;top:848.500px;width:175px;height:2px;background:#149c4a"></div>
<div class="abs" style="left:326.5px;top:842.6px;width:13.6px;height:13.6px;border-radius:50%;background:#149c4a"></div>
<div class="ic" style="left:326.5px;top:842.6px;width:13.6px;height:13.6px"><svg viewBox="0 0 24 24"><path d="M7 12.300l3.300 3.300 6.700-6.900" fill="none" stroke="#fff" stroke-width="2.400"/></svg></div>
<div class="abs" style="left:413.9px;top:842.6px;width:13.6px;height:13.6px;border-radius:50%;background:#149c4a"></div>
<div class="ic" style="left:413.9px;top:842.6px;width:13.6px;height:13.6px"><svg viewBox="0 0 24 24"><path d="M7 12.300l3.300 3.300 6.700-6.900" fill="none" stroke="#fff" stroke-width="2.400"/></svg></div>
<div class="abs" style="left:501.500px;top:842.600px;width:13.6px;height:13.6px;border-radius:50%;background:#e6e6e6;border:2px solid #149c4a"></div>
<div class="t" style="left:1015.5px;top:828.0px;font-size:13px;color:#f0f0f0;font-weight:bold;letter-spacing:-0.27px;">Cancel</div>
<div class="abs" style="left:1085px;top:820px;width:85px;height:35px;border-radius:5px;border:1.5px solid #e8e8e8"></div>
<div class="t" style="left:1101px;top:828.0px;font-size:13px;color:#f2f2f2;font-weight:bold;letter-spacing:-0.37px;">Previous</div>
<div class="abs" style="left:1181px;top:820px;width:75px;height:35px;border-radius:5px;background:#005bc9"></div>
<div class="t" style="left:1197px;top:828.0px;font-size:13px;color:#f2f2f2;font-weight:bold;letter-spacing:-0.06px;">Deploy</div>


</div></div>
</body>
</html>
